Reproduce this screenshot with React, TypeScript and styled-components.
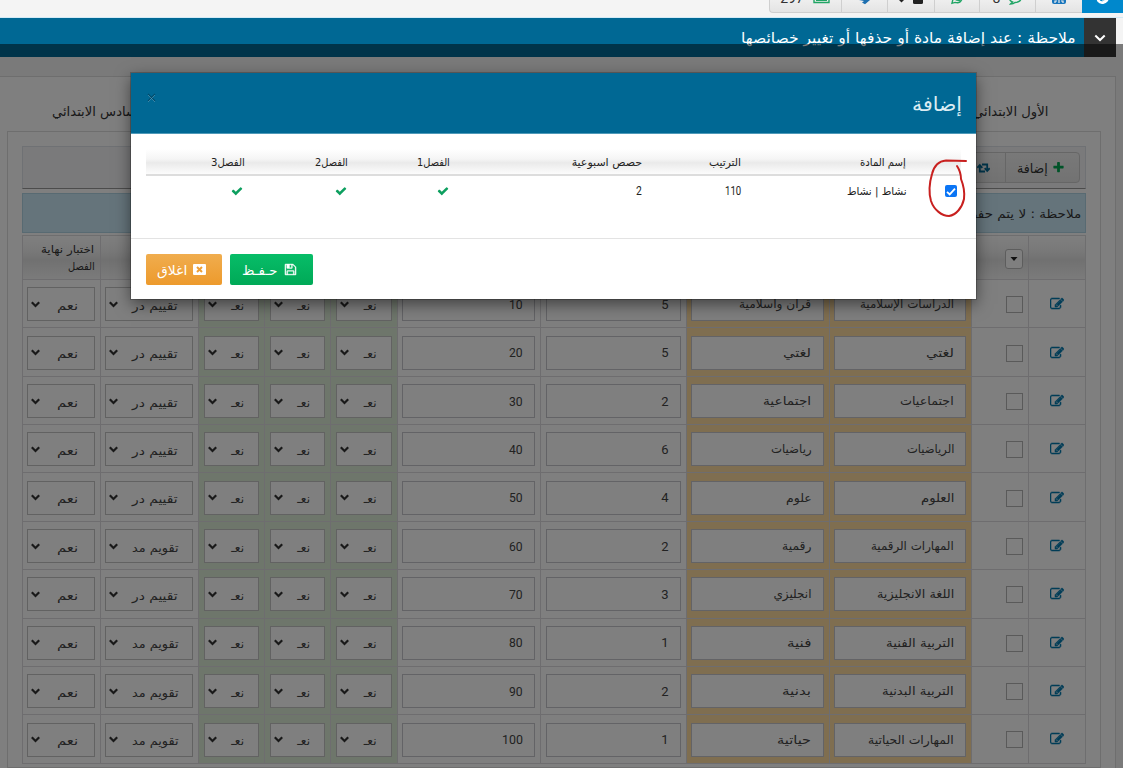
import React, { useLayoutEffect, useRef, useState } from "react";
import styled, { createGlobalStyle } from "styled-components";

const Global = createGlobalStyle`
  * { box-sizing: border-box; }
  html, body { margin: 0; padding: 0; overflow: hidden; background: #f4f4f4; }
  body { font-family: "DejaVu Sans", "Noto Sans", sans-serif; font-size: 12px; color: #333; }
`;

/* Single line of text condensed or widened to an exact measure */
const FitBox = styled.span<{ $w: number; $size: number; $color?: string; $dy?: number; $digits?: boolean }>`
  display: block;
  flex: none;
  width: ${(p) => p.$w}px;
  height: ${(p) => p.$size + 6}px;
  line-height: ${(p) => p.$size + 6}px;
  font-size: ${(p) => p.$size}px;
  font-family: ${(p) => (p.$digits ? 'Roboto, "DejaVu Sans", sans-serif' : "inherit")};
  color: ${(p) => p.$color || "inherit"};
  margin-top: ${(p) => p.$dy || 0}px;
  white-space: nowrap;
  direction: rtl;
`;
const FitInner = styled.span`
  display: inline-block;
  transform-origin: 100% 50%;
`;
type FitProps = { w: number; size?: number; color?: string; dy?: number; digits?: boolean; children: React.ReactNode };
function Fit({ w, size = 12, color, dy, digits, children }: FitProps) {
  const ref = useRef<HTMLSpanElement>(null);
  const [scale, setScale] = useState(1);
  useLayoutEffect(() => {
    if (ref.current) setScale(w / ref.current.offsetWidth);
  }, [w, children]);
  return (
    <FitBox $w={w} $size={size} $color={color} $dy={dy} $digits={digits}>
      <FitInner ref={ref} style={{ transform: `scaleX(${scale})` }}>{children}</FitInner>
    </FitBox>
  );
}

const PATHS = {
  edit: "M888 1184l116-116-152-152-116 116v56h96v96h56zm440-720q-16-16-33 1l-350 350q-17 17-1 33t33-1l350-350q17-17 1-33zm80 594v190q0 119-84.5 203.5t-203.5 84.5h-832q-119 0-203.5-84.5t-84.5-203.5v-832q0-119 84.5-203.5t203.5-84.5h832q63 0 117 25 15 7 18 23 3 17-9 29l-49 49q-14 14-32 8-23-6-45-6h-832q-66 0-113 47t-47 113v832q0 66 47 113t113 47h832q66 0 113-47t47-113v-126q0-13 9-22l64-64q15-15 35-7t20 29zm-96-738l288 288-672 672h-288v-288zm444 132l-92 92-288-288 92-92q28-28 68-28t68 28l152 152q28 28 28 68t-28 68z",
  save: "M512 1536h768v-384h-768v384zm896 0h128v-896q0-14-10-38.5t-20-34.5l-281-281q-10-10-34-20t-39-10v416q0 40-28 68t-68 28h-576q-40 0-68-28t-28-68v-416h-128v1280h128v-416q0-40 28-68t68-28h832q40 0 68 28t28 68v416zm-384-928v-320q0-13-9.5-22.5t-22.5-9.5h-192q-13 0-22.5 9.5t-9.5 22.5v320q0 13 9.5 22.5t22.5 9.5h192q13 0 22.5-9.5t9.5-22.5zm640 32v928q0 40-28 68t-68 28h-1344q-40 0-68-28t-28-68v-1344q0-40 28-68t68-28h928q40 0 88 20t76 48l280 280q28 28 48 76t20 88z",
  check: "M1671 566q0 40-28 68l-724 724-136 136q-28 28-68 28t-68-28l-136-136-362-362q-28-28-28-68t28-68l136-136q28-28 68-28t68 28l294 295 656-657q28-28 68-28t68 28l136 136q28 28 28 68z",
  plus: "M1600 736v192q0 40-28 68t-68 28h-416v416q0 40-28 68t-68 28h-192q-40 0-68-28t-28-68v-416h-416q-40 0-68-28t-28-68v-192q0-40 28-68t68-28h416v-416q0-40 28-68t68-28h192q40 0 68 28t28 68v416h416q40 0 68 28t28 68z",
};
const Svg = styled.svg`display: block; flex: none;`;
function Icon({ name, size, color, weight = 0 }: { name: keyof typeof PATHS; size: number; color: string; weight?: number }) {
  return (
    <Svg width={size} height={size} viewBox="0 0 1792 1792" fill={color} stroke={color} strokeWidth={weight}>
      <path d={PATHS[name]} />
    </Svg>
  );
}

const Page = styled.div`
  position: relative;
  width: 1123px;
  height: 768px;
  overflow: hidden;
  background: #f4f4f4;
  direction: rtl;
`;
const TopStrip = styled.div`
  height: 18px;
  display: flex;
  align-items: flex-start;
  border-bottom: 1px solid #d3eaf6;
`;
const TopItem = styled.div<{ $w: number; $blue?: boolean; $last?: boolean }>`
  width: ${(p) => p.$w}px;
  height: 13px;
  display: flex;
  justify-content: center;
  align-items: flex-end;
  gap: 9px;
  overflow: hidden;
  background: ${(p) => (p.$blue ? "#0088cc" : "linear-gradient(#eeeeee, #e4e4e4)")};
  border-left: ${(p) => (p.$blue ? 0 : 1)}px solid #cfcfcf;
  border-bottom: ${(p) => (p.$blue ? 0 : 1)}px solid #cfcfcf;
  border-bottom-left-radius: ${(p) => (p.$last ? 4 : 0)}px;
`;
const TopNumber = styled.span`
  height: 14px;
  font: 14px/14px Roboto, sans-serif;
  color: #333;
  transform: translateY(-7px);
`;

const Banner = styled.div`
  width: 1116px;
  height: 39px;
  margin-right: 7px;
  display: flex;
  background: #006894;
`;
const BannerToggle = styled.div`
  width: 32px;
  display: flex;
  align-items: center;
  justify-content: center;
  background: #333;
`;
const BannerText = styled.div`padding: 10px 8px 0 0;`;

const Panel = styled.main`
  width: 1124px;
  height: 712px;
  margin: 19px 7px 0 0;
  padding: 54px 14px 0 0;
  border: 1px solid #dddddd;
  background: #fff;
`;
const Tabs = styled.nav`
  display: flex;
  justify-content: space-between;
  position: relative;
  top: -29px;
  width: 1101px;
  height: 0;
  padding: 0 53px 0 52px;
`;
const Inner = styled.section`
  width: 1094px;
  height: 637px;
  padding: 14px 14px 0;
  border: 1px solid #dddddd;
  background: #fff;
`;
const ToolBar = styled.div`
  height: 43px;
  padding: 5px;
  background: #f4f4f6;
  border: 1px solid #dfe3e8;
  border-bottom: 1px solid #999;
`;
const ToolGroup = styled.div`
  display: flex;
  width: 160px;
  height: 31px;
  border: 1px solid #cccccc;
  border-radius: 4px;
  background: linear-gradient(#f2f2f2, #e5e5e5);
`;
const ToolButton = styled.div<{ $w: number }>`
  width: ${(p) => p.$w}px;
  display: flex;
  align-items: center;
  justify-content: center;
  border-left: 1px solid #ccc;
`;
const ToolPlus = styled(ToolButton)`
  justify-content: flex-start;
  gap: 4px;
  padding-right: 14px;
`;
const Notice = styled.div`
  height: 40px;
  margin: 4px 0 2px;
  padding: 11px 4px 0;
  background: #cae8f7;
  border: 1px solid #b0d4e5;
`;

const COLS = "57px 57px 142.5px 143px 145.5px 143.5px 66.5px 66px 66px 98.5px 78px";
const Grid = styled.div`
  width: 1064px;
  border-right: 1px solid #dddddf;
  border-top: 1px solid #dddddf;
`;
const HeadRow = styled.div`
  display: grid;
  grid-template-columns: ${COLS};
  height: 44px;
  background: linear-gradient(#fff 0%, #f1f1f1 35%, #e2e2e2 55%, #f8f8f8 100%);
`;
const Row = styled.div`
  display: grid;
  grid-template-columns: ${COLS};
  height: 48.36px;
`;
const Cell = styled.div<{ $tone?: string; $center?: boolean }>`
  display: flex;
  justify-content: ${(p) => (p.$center ? "center" : "stretch")};
  align-items: ${(p) => (p.$center ? "center" : "flex-start")};
  padding: ${(p) => (p.$center ? "1px 0 0" : "7.3px 5px 0 4.5px")};
  background: ${(p) => p.$tone || "transparent"};
  border-left: 1px solid #dcdade;
  border-bottom: 1px solid #dcdade;
`;
const HeadLabel = styled(Cell)`
  flex-direction: column;
  padding: 5px 5px 0;
`;
const ControlCell = styled(Cell)`
  justify-content: flex-start;
  align-items: center;
  padding: 2px 5px 0 0;
`;
const Drop = styled.div`
  width: 18px;
  height: 20px;
  display: flex;
  align-items: center;
  justify-content: center;
  border: 1px solid #bbb;
  border-radius: 3px;
  background: #fff;
`;
const Field = styled.div<{ $pad?: number }>`
  flex: 1;
  height: 34px;
  display: flex;
  align-items: center;
  padding-right: ${(p) => p.$pad ?? 11}px;
  border: 1px solid #c6c6cc;
  background: #fff;
  color: #444;
`;
const SelectField = styled(Field)`
  justify-content: space-between;
  padding-left: 3px;
  border-color: #c4c4c4;
  color: #444;
`;
const Box = styled.span`
  width: 17px;
  height: 17px;
  border: 1px solid #b5b5b5;
  background: #fff;
`;

function Arrow() {
  return (
    <Svg width="9" height="7" viewBox="0 0 9 7" fill="none" stroke="#333" strokeWidth="2.2">
      <path d="M0.8 1.2L4.5 5L8.2 1.2" />
    </Svg>
  );
}

const Backdrop = styled.div`
  position: absolute;
  inset: 44px 0 0 0;
  background: rgba(0, 0, 0, 0.5);
`;
const Modal = styled.div`
  position: absolute;
  left: 131px;
  top: 73px;
  width: 845px;
  height: 226px;
  background: #fff;
  box-shadow: 0 5px 15px rgba(0, 0, 0, 0.5), 0 0 0 1px rgba(0, 0, 0, 0.2);
`;
const ModalHead = styled.header`
  height: 61px;
  display: flex;
  justify-content: space-between;
  padding: 18px 14px 0 16px;
  background: #006894;
  border-bottom: 1px solid #4f99b8;
`;
const ModalBody = styled.div`
  height: 105px;
  padding: 15px 15px 0;
  border-bottom: 1px solid #e3e3e3;
`;
const MRow = styled.div<{ $head?: boolean }>`
  display: grid;
  grid-template-columns: 55px 165px 99px 192px 102px 103px 99px;
  height: ${(p) => (p.$head ? 27 : 30)}px;
  padding-top: ${(p) => (p.$head ? 1 : 0)}px;
  align-items: center;
  color: #222;
  background: ${(p) => (p.$head ? "linear-gradient(#fff 0%, #f5f5f5 40%, #eaeaea 55%, #fcfcfc 100%)" : "none")};
  border-bottom: ${(p) => (p.$head ? "2px solid #ddd" : "0")};
`;
const Tick = styled.div<{ $in: number }>`padding-right: ${(p) => p.$in}px;`;
const Checked = styled.div`
  width: 12px;
  height: 12px;
  margin-right: 4px;
  display: flex;
  align-items: center;
  justify-content: center;
  border-radius: 2px;
  background: #0b75f5;
`;
const ModalFoot = styled.footer`
  display: flex;
  justify-content: flex-end;
  gap: 8px;
  padding: 15px 0 0 15px;
`;
const Button = styled.div<{ $w: number; $from: string; $to: string }>`
  width: ${(p) => p.$w}px;
  height: 31px;
  display: flex;
  align-items: center;
  justify-content: flex-start;
  gap: 6px;
  padding-right: 16px;
  border-radius: 2px;
  background: linear-gradient(${(p) => p.$from}, ${(p) => p.$to});
  color: #fff;
`;
const Scribble = styled.svg`
  position: absolute;
  left: 920px;
  top: 150px;
`;

const ORANGE = "#ffdda0";
const GREEN = "#dcecd6";
const A = "تقييم در";
const B = "تقويم مد";
const rows: [string, number, string, number, string, string, string][] = [
  ["الدراسات الإسلامية", 94, "قران واسلامية", 72, "5", "10", A],
  ["لغتي", 28, "لغتي", 28, "5", "20", A],
  ["اجتماعيات", 54, "اجتماعية", 48, "2", "30", A],
  ["الرياضيات", 47, "رياضيات", 41, "6", "40", A],
  ["العلوم", 33, "علوم", 26, "4", "50", A],
  ["المهارات الرقمية", 83, "رقمية", 30, "2", "60", B],
  ["اللغة الانجليزية", 77, "انجليزي", 38, "3", "70", A],
  ["التربية الفنية", 68, "فنية", 24, "1", "80", B],
  ["التربية البدنية", 72, "بدنية", 29, "2", "90", B],
  ["المهارات الحياتية", 86, "حياتية", 34, "1", "100", B],
];

export default function App() {
  return (
    <Page>
      <Global />
      <TopStrip>
        <TopItem $w={41} $blue>
          <Svg width="14" height="13" viewBox="0 0 14 13" fill="none" stroke="#fff" strokeWidth="2.8"><path d="M3 -3C1 0 3 3 7 2.5C10 2 12 0 11 -3M6 -1L9 -1" /></Svg>
        </TopItem>
        <TopItem $w={47}>
          <Svg width="14" height="12" viewBox="0 0 14 12"><path d="M0 0H14V2Q14 4 12 4H2Q0 4 0 2Z" fill="#1976bd" /><path d="M3 3V1H5M11 3V1H9M7 3V0" stroke="#eee" strokeWidth="1.2" fill="none" /></Svg>
        </TopItem>
        <TopItem $w={56}>
          <Svg width="13" height="12" viewBox="0 0 13 12" fill="none" stroke="#20a565" strokeWidth="1.4"><path d="M1 -2C0 0 2 1.5 3.5 2L1.5 4Q4.5 4 6 2.5Q12 2 12 -2" /></Svg>
          <TopNumber>8</TopNumber>
        </TopItem>
        <TopItem $w={45}>
          <Svg width="12" height="12" viewBox="0 0 12 12" fill="none" stroke="#20a565" strokeWidth="1.4"><path d="M2 -1L1 3.3L4 2.4Q9 4 11 -1M4 -1Q6 1 9 0" /></Svg>
        </TopItem>
        <TopItem $w={47}>
          <Svg width="10" height="12" viewBox="0 0 10 12"><path d="M0 0H10V2.5Q10 4 8.5 4H1.5Q0 4 0 2.5Z" fill="#222" /></Svg>
          <Svg width="5" height="12" viewBox="0 0 5 12"><path d="M0 0h5L2.5 2.5z" fill="#222" /></Svg>
        </TopItem>
        <TopItem $w={46}>
          <Svg width="11" height="12" viewBox="0 0 11 12"><path d="M0 0H11L6 4.2L3 2.5L5 1Z" fill="#1d6fb0" /></Svg>
        </TopItem>
        <TopItem $w={72} $last>
          <Svg width="18" height="12" viewBox="0 0 18 12" fill="none" stroke="#20a565" strokeWidth="1.4"><path d="M1 -2V2.5H16V-2M3 0.3H14" /></Svg>
          <TopNumber>297</TopNumber>
        </TopItem>
      </TopStrip>
      <Banner>
        <BannerToggle>
          <Svg width="12" height="8" viewBox="0 0 12 8" fill="none" stroke="#fff" strokeWidth="2"><path d="M1.3 1.5L6 6L10.7 1.5" /></Svg>
        </BannerToggle>
        <BannerText><Fit w={335} size={15} color="#fff">ملاحظة : عند إضافة مادة أو حذفها أو تغيير خصائصها</Fit></BannerText>
      </Banner>

      <Panel>
        <Tabs>
          <Fit w={75} size={13}>الأول الابتدائي</Fit>
          <Fit w={93} size={13}>السادس الابتدائي</Fit>
        </Tabs>
        <Inner>
          <ToolBar>
            <ToolGroup>
              <ToolPlus $w={74}>
                <Icon name="plus" size={13} color="#00a651" />
                <Fit w={31} size={13} dy={2}>إضافة</Fit>
              </ToolPlus>
              <ToolButton $w={44}>
                <Svg width="13" height="10" viewBox="0 0 13 10" fill="none" stroke="#006894" strokeWidth="1.8"><path d="M8 8.5H2.8V3M0.3 4.8L2.8 2L5.3 4.8M5 1.5H10.2V7M7.7 5.2L10.2 8L12.7 5.2" /></Svg>
              </ToolButton>
            </ToolGroup>
          </ToolBar>
          <Notice><Fit w={116} size={12}>ملاحظة : لا يتم حفظ</Fit></Notice>
          <Grid>
            <HeadRow>
              <Cell />
              <ControlCell><Drop><Svg width="8" height="4" viewBox="0 0 8 4" fill="#222"><path d="M0.5 0H7.5L4 4Z" /></Svg></Drop></ControlCell>
              <Cell /><Cell /><Cell /><Cell /><Cell /><Cell /><Cell /><Cell />
              <HeadLabel>
                <Fit w={53} size={11}>اختبار نهاية</Fit>
                <Fit w={27} size={11}>الفصل</Fit>
              </HeadLabel>
            </HeadRow>
            {rows.map((r, i) => (
              <Row key={i}>
                <Cell $center><Icon name="edit" size={14} color="#0079ae" weight={70} /></Cell>
                <ControlCell><Box /></ControlCell>
                <Cell $tone={ORANGE}><Field><Fit w={r[1]}>{r[0]}</Fit></Field></Cell>
                <Cell $tone={ORANGE}><Field><Fit w={r[3]}>{r[2]}</Fit></Field></Cell>
                <Cell><Field><Fit w={7} size={13} digits>{r[4]}</Fit></Field></Cell>
                <Cell><Field><Fit w={r[5].length * 7} size={13} digits>{r[5]}</Fit></Field></Cell>
                {[0, 1, 2].map((k) => (
                  <Cell key={k} $tone={GREEN}><SelectField $pad={14}><Fit w={13} dy={3}>نعـ</Fit><Arrow /></SelectField></Cell>
                ))}
                <Cell><SelectField $pad={14}><Fit w={46} dy={3}>{r[6]}</Fit><Arrow /></SelectField></Cell>
                <Cell><SelectField $pad={15}><Fit w={21} dy={3}>نعم</Fit><Arrow /></SelectField></Cell>
              </Row>
            ))}
          </Grid>
        </Inner>
      </Panel>

      <Backdrop />

      <Modal>
        <ModalHead>
          <Fit w={50} size={20} color="#dcecf3">إضافة</Fit>
          <Svg width="9" height="14" viewBox="0 0 9 14" fill="none"><path d="M1 3L8 10M8 3L1 10" stroke="#004c6d" strokeWidth="1.3" /><path d="M1 4L8 11M8 4L1 11" stroke="#5fa0bc" strokeWidth="0.6" /></Svg>
        </ModalHead>
        <ModalBody>
          <MRow $head>
            <span />
            <Fit w={46} size={11}>إسم المادة</Fit>
            <Fit w={32} size={11}>الترتيب</Fit>
            <Fit w={70} size={11}>حصص اسبوعية</Fit>
            <Fit w={33} size={11}>الفصل1</Fit>
            <Fit w={33} size={11}>الفصل2</Fit>
            <Fit w={34} size={11}>الفصل3</Fit>
          </MRow>
          <MRow>
            <Checked><Svg width="10" height="9" viewBox="0 0 10 9" fill="none" stroke="#fff" strokeWidth="1.8"><path d="M1 4.8L3.7 7.4L9 1.6" /></Svg></Checked>
            <Fit w={60} size={11}>نشاط | نشاط</Fit>
            <Fit w={16} size={12} digits>110</Fit>
            <Fit w={6} size={12} digits>2</Fit>
            <Tick $in={1}><Icon name="check" size={12} color="#0d9f5f" /></Tick>
            <Tick $in={1}><Icon name="check" size={12} color="#0d9f5f" /></Tick>
            <Tick $in={2}><Icon name="check" size={12} color="#0d9f5f" /></Tick>
          </MRow>
        </ModalBody>
        <ModalFoot>
          <Button $w={83} $from="#07bd68" $to="#00a957">
            <Icon name="save" size={13} color="#fff" weight={50} />
            <Fit w={36} size={13} dy={1}>حـفـظ</Fit>
          </Button>
          <Button $w={76} $from="#f0ad4e" $to="#ed9a2c">
            <Svg width="13" height="11" viewBox="0 0 13 11"><rect width="13" height="11" rx="1" fill="#fff" /><path d="M4 3L9 8M9 3L4 8" stroke="#ee9f35" strokeWidth="2" /></Svg>
            <Fit w={30} size={13} dy={1}>اغلاق</Fit>
          </Button>
        </ModalFoot>
      </Modal>

      <Scribble width="56" height="72" viewBox="0 0 56 72" fill="none" stroke="#c8201f" strokeWidth="2" strokeLinecap="round" strokeLinejoin="round">
        <path d="M46 11L26 10.5C19 11 14 16 12 24C9 34 9 44 11 51C14 60 22 66 29 66C36 65 42 58 44 49C45 41 43 34 41 29C41 24 39 19 37 16" />
      </Scribble>
    </Page>
  );
}
